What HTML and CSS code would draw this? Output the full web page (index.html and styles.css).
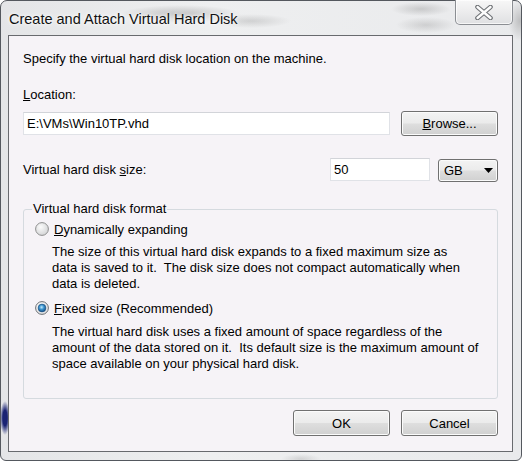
FILE: index.html
```html
<!DOCTYPE html>
<html>
<head>
  <title>Create and Attach Virtual Hard Disk</title>
  <link rel="stylesheet" href="styles.css">
</head>
<body>
  <div class="window">
    <div class="titlebar">
      <span class="title">Create and Attach Virtual Hard Disk</span>
      <div class="close">
        <svg width="18" height="15" viewBox="0 0 18 15">
          <path d="M2.5 2 L15.5 13 M15.5 2 L2.5 13" stroke="#6f7276" stroke-width="4.6" stroke-linecap="round" fill="none"/>
          <path d="M2.5 2 L15.5 13 M15.5 2 L2.5 13" stroke="#fdfdfd" stroke-width="2.4" stroke-linecap="round" fill="none"/>
        </svg>
      </div>
    </div>

    <div class="client">
      <p class="intro">Specify the virtual hard disk location on the machine.</p>

      <label class="field-label"><u>L</u>ocation:</label>
      <div class="loc-row">
        <div class="textbox loc-box">E:\VMs\Win10TP.vhd</div>
        <button class="btn browse"><u>B</u>rowse...</button>
      </div>

      <div class="size-row">
        <span class="size-label">Virtual hard disk <u>s</u>ize:</span>
        <div class="textbox size-box">50</div>
        <div class="combo">
          <span>GB</span>
          <svg width="9" height="5" viewBox="0 0 9 5"><path d="M0 0 H9 L4.5 5 Z" fill="#000"/></svg>
        </div>
      </div>

      <fieldset class="group">
        <legend>Virtual hard disk format</legend>

        <div class="radio-row">
          <svg class="radio" width="14" height="14" viewBox="0 0 14 14">
            <defs>
              <radialGradient id="off" cx="0.4" cy="0.35" r="0.75">
                <stop offset="0" stop-color="#fbfbfb"/>
                <stop offset="1" stop-color="#cfd0d2"/>
              </radialGradient>
            </defs>
            <circle cx="7" cy="7" r="6.4" fill="url(#off)" stroke="#8e8f8f"/>
          </svg>
          <span><u>D</u>ynamically expanding</span>
        </div>
        <p class="desc">The size of this virtual hard disk expands to a fixed maximum size as<br>data is saved to it.&nbsp; The disk size does not compact automatically when<br>data is deleted.</p>

        <div class="radio-row second">
          <svg class="radio" width="14" height="14" viewBox="0 0 14 14">
            <defs>
              <radialGradient id="ring" cx="0.4" cy="0.35" r="0.75">
                <stop offset="0" stop-color="#fdfdfd"/>
                <stop offset="1" stop-color="#d8d9db"/>
              </radialGradient>
              <radialGradient id="dot" cx="0.45" cy="0.4" r="0.65">
                <stop offset="0" stop-color="#c4ebfc"/>
                <stop offset="0.45" stop-color="#3a92cd"/>
                <stop offset="1" stop-color="#11457a"/>
              </radialGradient>
            </defs>
            <circle cx="7" cy="7" r="6.4" fill="url(#ring)" stroke="#6d7074"/>
            <circle cx="7" cy="7" r="3.9" fill="url(#dot)" stroke="#1b4f80" stroke-width="0.6"/>
          </svg>
          <span><u>F</u>ixed size (Recommended)</span>
        </div>
        <p class="desc">The virtual hard disk uses a fixed amount of space regardless of the<br>amount of the data stored on it.&nbsp; Its default size is the maximum amount of<br>space available on your physical hard disk.</p>
      </fieldset>

      <div class="buttons">
        <button class="btn action">OK</button>
        <button class="btn action">Cancel</button>
      </div>
    </div>
  </div>
</body>
</html>
```

FILE: styles.css
```css
body {
  margin: 0;
  font: 13px "Liberation Sans", Arial, sans-serif;
  color: #000;
}

.window {
  width: 522px;
  height: 461px;
  box-sizing: border-box;
  border: 1px solid #54585e;
  border-radius: 7px 7px 6px 6px;
  padding: 0 8px 8px 7px;
  display: flex;
  flex-direction: column;
  background:
    radial-gradient(ellipse 5px 17px at 4px 417px, #1a2373 45%, rgba(26,35,115,0)),
    radial-gradient(ellipse 60px 9px at 180px 13px, rgba(110,110,110,.35), rgba(110,110,110,0)),
    radial-gradient(ellipse 40px 7px at 250px 20px, rgba(120,120,120,.25), rgba(120,120,120,0)),
    radial-gradient(ellipse 30px 7px at 420px 8px, rgba(120,120,120,.3), rgba(120,120,120,0)),
    radial-gradient(ellipse 30px 8px at 425px 24px, rgba(120,120,120,.25), rgba(120,120,120,0)),
    radial-gradient(ellipse 12px 20px at 519px 20px, rgba(110,110,110,.35), rgba(110,110,110,0)),
    radial-gradient(ellipse 20px 5px at 300px 458px, rgba(130,130,130,.25), rgba(130,130,130,0)),
    linear-gradient(90deg, #e4e5e7, #eeeff0 40%, #e9eaec);
}

.titlebar {
  height: 34px;
  display: flex;
  justify-content: space-between;
  align-items: flex-start;
}

.title {
  margin-left: 1px;
  padding-top: 9px;
  font-size: 14.5px;
  line-height: 18px;
  color: #111;
  text-shadow: 0 0 6px #fff, 0 0 3px #fff;
}

.close {
  margin-top: -1px;
  width: 58px;
  height: 25px;
  box-sizing: border-box;
  border: 1px solid #8b8e93;
  border-top: none;
  border-radius: 0 0 5px 5px;
  background: linear-gradient(#f7f7f7, #ececed 50%, #dfe0e2);
  box-shadow: inset 0 0 0 1px rgba(255,255,255,.7);
  display: flex;
  align-items: center;
  justify-content: center;
}

.client {
  flex: 1;
  background: #f6f3f7;
  border: 1px solid #686a6e;
  padding: 15px 14px 0 14px;
  display: flex;
  flex-direction: column;
}

.intro {
  margin: 0;
  line-height: 16px;
}

.field-label {
  margin-top: 20px;
  line-height: 16px;
}

.loc-row {
  margin-top: 8px;
  height: 25px;
  display: flex;
  align-items: center;
}

.textbox {
  box-sizing: border-box;
  height: 23px;
  line-height: 21px;
  padding-left: 3px;
  background: #fff;
  border: 1px solid #e0e2e7;
  border-top-color: #d2d4d9;
}

.loc-box {
  width: 367px;
}

.btn {
  box-sizing: border-box;
  width: 97px;
  height: 25px;
  padding: 0;
  border: 1px solid #707070;
  border-radius: 3px;
  background: linear-gradient(#f3f3f3, #ebebeb 48%, #dedede 52%, #d0d0d0);
  box-shadow: inset 0 0 0 1px #fbfbfb;
  font: inherit;
  color: #000;
}

.browse {
  margin-left: auto;
}

.size-row {
  margin-top: 22px;
  height: 24px;
  display: flex;
  align-items: flex-start;
}

.size-label {
  flex: 1;
  line-height: 24px;
}

.size-box {
  width: 100px;
}

.combo {
  box-sizing: border-box;
  margin: 1px 0 0 8px;
  width: 60px;
  height: 23px;
  padding: 0 4px 0 5px;
  border: 1px solid #707070;
  border-radius: 3px;
  background: linear-gradient(#f3f3f3, #ebebeb 48%, #dedede 52%, #d0d0d0);
  box-shadow: inset 0 0 0 1px #fbfbfb;
  display: flex;
  align-items: center;
  justify-content: space-between;
}

.group {
  margin: 19px 0 0 0;
  padding: 4px 13px 26px 10px;
  border: 1px solid #d5dadf;
  border-radius: 3px;
}

.group legend {
  padding: 0 1px;
  margin-left: -2px;
  line-height: 16px;
}

.radio-row {
  display: flex;
  align-items: center;
  height: 16px;
}

.radio {
  margin: 0 5px 0 1px;
}

.radio-row.second {
  margin-top: 8px;
}

.desc {
  margin: 7px 0 0 0;
  padding-left: 18px;
  line-height: 16px;
}

.radio-row.second + .desc {
  margin-top: 8px;
}

.buttons {
  margin-top: 11px;
  display: flex;
  justify-content: flex-end;
  gap: 11px;
}

.action {
  height: 26px;
}
```
